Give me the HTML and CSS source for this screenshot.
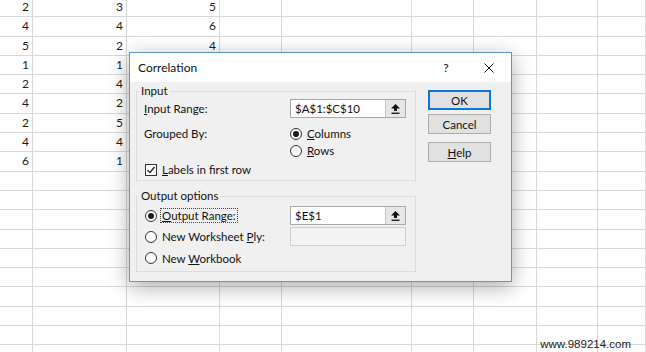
FILE: index.html
```html
<!DOCTYPE html>
<html>
<head>
<meta charset="utf-8">
<link rel="stylesheet" href="styles.css">
</head>
<body>
<div class="sheet">
  <span>2</span><span>3</span><span>5</span><span></span><span></span><span></span><span></span><span></span><span></span>
  <span>4</span><span>4</span><span>6</span><span></span><span></span><span></span><span></span><span></span><span></span>
  <span>5</span><span>2</span><span>4</span><span></span><span></span><span></span><span></span><span></span><span></span>
  <span>1</span><span>1</span><span></span><span></span><span></span><span></span><span></span><span></span><span></span>
  <span>2</span><span>4</span><span></span><span></span><span></span><span></span><span></span><span></span><span></span>
  <span>4</span><span>2</span><span></span><span></span><span></span><span></span><span></span><span></span><span></span>
  <span>2</span><span>5</span><span></span><span></span><span></span><span></span><span></span><span></span><span></span>
  <span>4</span><span>4</span><span></span><span></span><span></span><span></span><span></span><span></span><span></span>
  <span>6</span><span>1</span><span></span><span></span><span></span><span></span><span></span><span></span><span></span>
  <span></span><span></span><span></span><span></span><span></span><span></span><span></span><span></span><span></span>
  <span></span><span></span><span></span><span></span><span></span><span></span><span></span><span></span><span></span>
  <span></span><span></span><span></span><span></span><span></span><span></span><span></span><span></span><span></span>
  <span></span><span></span><span></span><span></span><span></span><span></span><span></span><span></span><span></span>
  <span></span><span></span><span></span><span></span><span></span><span></span><span></span><span></span><span></span>
  <span></span><span></span><span></span><span></span><span></span><span></span><span></span><span></span><span></span>
  <span></span><span></span><span></span><span></span><span></span><span></span><span></span><span></span><span></span>
  <span></span><span></span><span></span><span></span><span></span><span></span><span></span><span></span><span></span>
  <span></span><span></span><span></span><span></span><span></span><span></span><span></span><span></span><span></span>
  <span></span><span></span><span></span><span></span><span></span><span></span><span></span><span></span><span></span>
</div>

<div class="dialog">
  <div class="titlebar">
    <span class="title">Correlation</span>
    <span class="help">?</span>
    <svg class="close" width="10" height="10" viewBox="0 0 10 10"><path d="M0.5 0.5L9.5 9.5M9.5 0.5L0.5 9.5" stroke="#111" stroke-width="1"/></svg>
  </div>
  <div class="dlg-body">
    <div class="groups">
      <fieldset class="group group-input">
        <legend>Input</legend>
        <div class="field-row">
          <span class="lbl"><u>I</u>nput Range:</span>
          <div class="refbox">
            <span class="reftext">$A$1:$C$10</span>
            <span class="refbtn"><svg width="9" height="10" viewBox="0 0 9 10"><path d="M4.5 0L9 4.5H6V7H3V4.5H0Z" fill="#111"/><rect x="0.5" y="8.6" width="8" height="1.3" fill="#111"/></svg></span>
          </div>
        </div>
        <div class="grouped-row">
          <span class="lbl lbl-top">Grouped By:</span>
          <div class="radios">
            <div class="opt"><span class="radio on"></span><span><u>C</u>olumns</span></div>
            <div class="opt"><span class="radio"></span><span><u>R</u>ows</span></div>
          </div>
        </div>
        <div class="check-row">
          <span class="checkbox"><svg width="10" height="10" viewBox="0 0 10 10"><path d="M1.5 5L4 7.5L8.5 2" stroke="#222" stroke-width="1.3" fill="none"/></svg></span>
          <span><u>L</u>abels in first row</span>
        </div>
      </fieldset>

      <fieldset class="group group-output">
        <legend>Output options</legend>
        <div class="opt-row first">
          <div class="opt-label"><span class="radio on"></span><span class="focus"><u>O</u>utput Range:</span></div>
          <div class="refbox">
            <span class="reftext">$E$1</span>
            <span class="refbtn"><svg width="9" height="10" viewBox="0 0 9 10"><path d="M4.5 0L9 4.5H6V7H3V4.5H0Z" fill="#111"/><rect x="0.5" y="8.6" width="8" height="1.3" fill="#111"/></svg></span>
          </div>
        </div>
        <div class="opt-row">
          <div class="opt-label"><span class="radio"></span><span>New Worksheet <u>P</u>ly:</span></div>
          <div class="textbox disabled"></div>
        </div>
        <div class="opt-row last">
          <div class="opt-label"><span class="radio"></span><span>New <u>W</u>orkbook</span></div>
        </div>
      </fieldset>
    </div>
    <div class="buttons">
      <button class="btn default">OK</button>
      <button class="btn cancel">Cancel</button>
      <button class="btn help-btn"><u>H</u>elp</button>
    </div>
  </div>
</div>

<div class="wm">www.989214.com</div>
</body>
</html>
```

FILE: styles.css
```css
html, body {
  margin: 0;
  padding: 0;
}
body {
  width: 646px;
  height: 352px;
  overflow: hidden;
  position: relative;
  background: #fff;
  font-family: Lato, "Open Sans", sans-serif;
}

/* spreadsheet */
.sheet {
  display: grid;
  grid-template-columns: 33px 94px 93px 62px 130px 62px 63px 61px 1fr;
  grid-auto-rows: 19.3px;
  margin-top: -2px;
}
.sheet > span {
  box-sizing: border-box;
  border-right: 1px solid #d8d8d8;
  border-bottom: 1px solid #d8d8d8;
  text-align: right;
  padding-right: 3px;
  font-size: 12px;
  line-height: 18px;
  color: #1c1c1c;
}

/* dialog */
.dialog {
  position: absolute;
  left: 129px;
  top: 52px;
  width: 383px;
  height: 230px;
  box-sizing: border-box;
  border: 1px solid #5e97cf;
  background: #f0f0f0;
  box-shadow: 0 5px 20px rgba(0, 0, 0, 0.33);
  display: flex;
  flex-direction: column;
  font-size: 11.5px;
  color: #111;
}
.titlebar {
  height: 29px;
  flex: none;
  background: #fff;
  display: flex;
  align-items: center;
  padding-left: 8px;
}
.title {
  flex: 1;
  font-size: 12px;
}
.help {
  width: 10px;
  text-align: center;
  font-size: 12px;
  margin-right: 33px;
}
.close {
  margin-right: 17px;
  display: block;
}

.dlg-body {
  flex: 1;
  display: flex;
  gap: 12px;
  padding: 2px 20px 8px 6px;
}
.groups {
  width: 280px;
  display: flex;
  flex-direction: column;
}
.group {
  margin: 0;
  border: 1px solid #dcdcdc;
  padding: 0 9px 2px 7px;
  min-width: 0;
}
.group legend {
  padding: 0 2px;
  margin-left: -5px;
  line-height: 14px;
}
.group-output {
  margin-top: 8px;
}

.lbl {
  width: 146px;
  flex: none;
}
.field-row {
  display: flex;
  align-items: center;
  height: 19px;
  margin-top: 1px;
}
.refbox {
  width: 116px;
  height: 19px;
  box-sizing: border-box;
  border: 1px solid #a8a8a8;
  background: #fff;
  display: flex;
}
.reftext {
  flex: 1;
  padding-left: 4px;
  line-height: 17px;
}
.refbtn {
  width: 20px;
  box-sizing: border-box;
  border-left: 1px solid #c4c4c4;
  background: #e6e6e6;
  display: flex;
  align-items: center;
  justify-content: center;
}
.textbox {
  width: 116px;
  height: 19px;
  box-sizing: border-box;
  border: 1px solid #a8a8a8;
  background: #fff;
}
.textbox.disabled {
  background: #f3f3f3;
  border-color: #d0d0d0;
}

.grouped-row {
  display: flex;
  margin-top: 7px;
}
.lbl-top {
  line-height: 17px;
}
.radios {
  display: flex;
  flex-direction: column;
}
.opt {
  height: 17px;
  display: flex;
  align-items: center;
  gap: 5px;
}
.radio {
  width: 12px;
  height: 12px;
  box-sizing: border-box;
  border: 1px solid #333;
  border-radius: 50%;
  background: #fff;
  display: flex;
  align-items: center;
  justify-content: center;
  flex: none;
}
.radio.on::after {
  content: "";
  width: 6px;
  height: 6px;
  border-radius: 50%;
  background: #1a1a1a;
}
.check-row {
  height: 17px;
  margin-top: 2px;
  display: flex;
  align-items: center;
  gap: 5px;
  padding-left: 1px;
}
.checkbox {
  width: 12px;
  height: 12px;
  box-sizing: border-box;
  border: 1px solid #333;
  background: #fff;
  display: flex;
  align-items: center;
  justify-content: center;
}

.opt-row {
  display: flex;
  align-items: center;
  height: 21px;
}
.opt-row.first {
  margin-top: 2px;
}
.opt-row.last {
  height: 22px;
}
.opt-label {
  width: 146px;
  flex: none;
  display: flex;
  align-items: center;
  gap: 5px;
  padding-left: 1px;
  box-sizing: border-box;
}
.focus {
  outline: 1px dotted #444;
  padding: 0 1px;
  margin-left: -1px;
}

.buttons {
  width: 63px;
  display: flex;
  flex-direction: column;
  padding-top: 6px;
}
.btn {
  height: 20px;
  box-sizing: border-box;
  background: #e1e1e1;
  border: 1px solid #adadad;
  font-family: Lato, "Open Sans", sans-serif;
  font-size: 11.5px;
  color: #111;
  padding: 0;
}
.btn.default {
  border: 2px solid #0a78d4;
}
.btn.cancel {
  margin-top: 4px;
}
.btn.help-btn {
  margin-top: 8px;
}

.wm {
  position: absolute;
  right: 15px;
  bottom: 2px;
  font-family: "Liberation Sans", Arial, sans-serif;
  font-size: 11.5px;
  color: #222;
}
```
